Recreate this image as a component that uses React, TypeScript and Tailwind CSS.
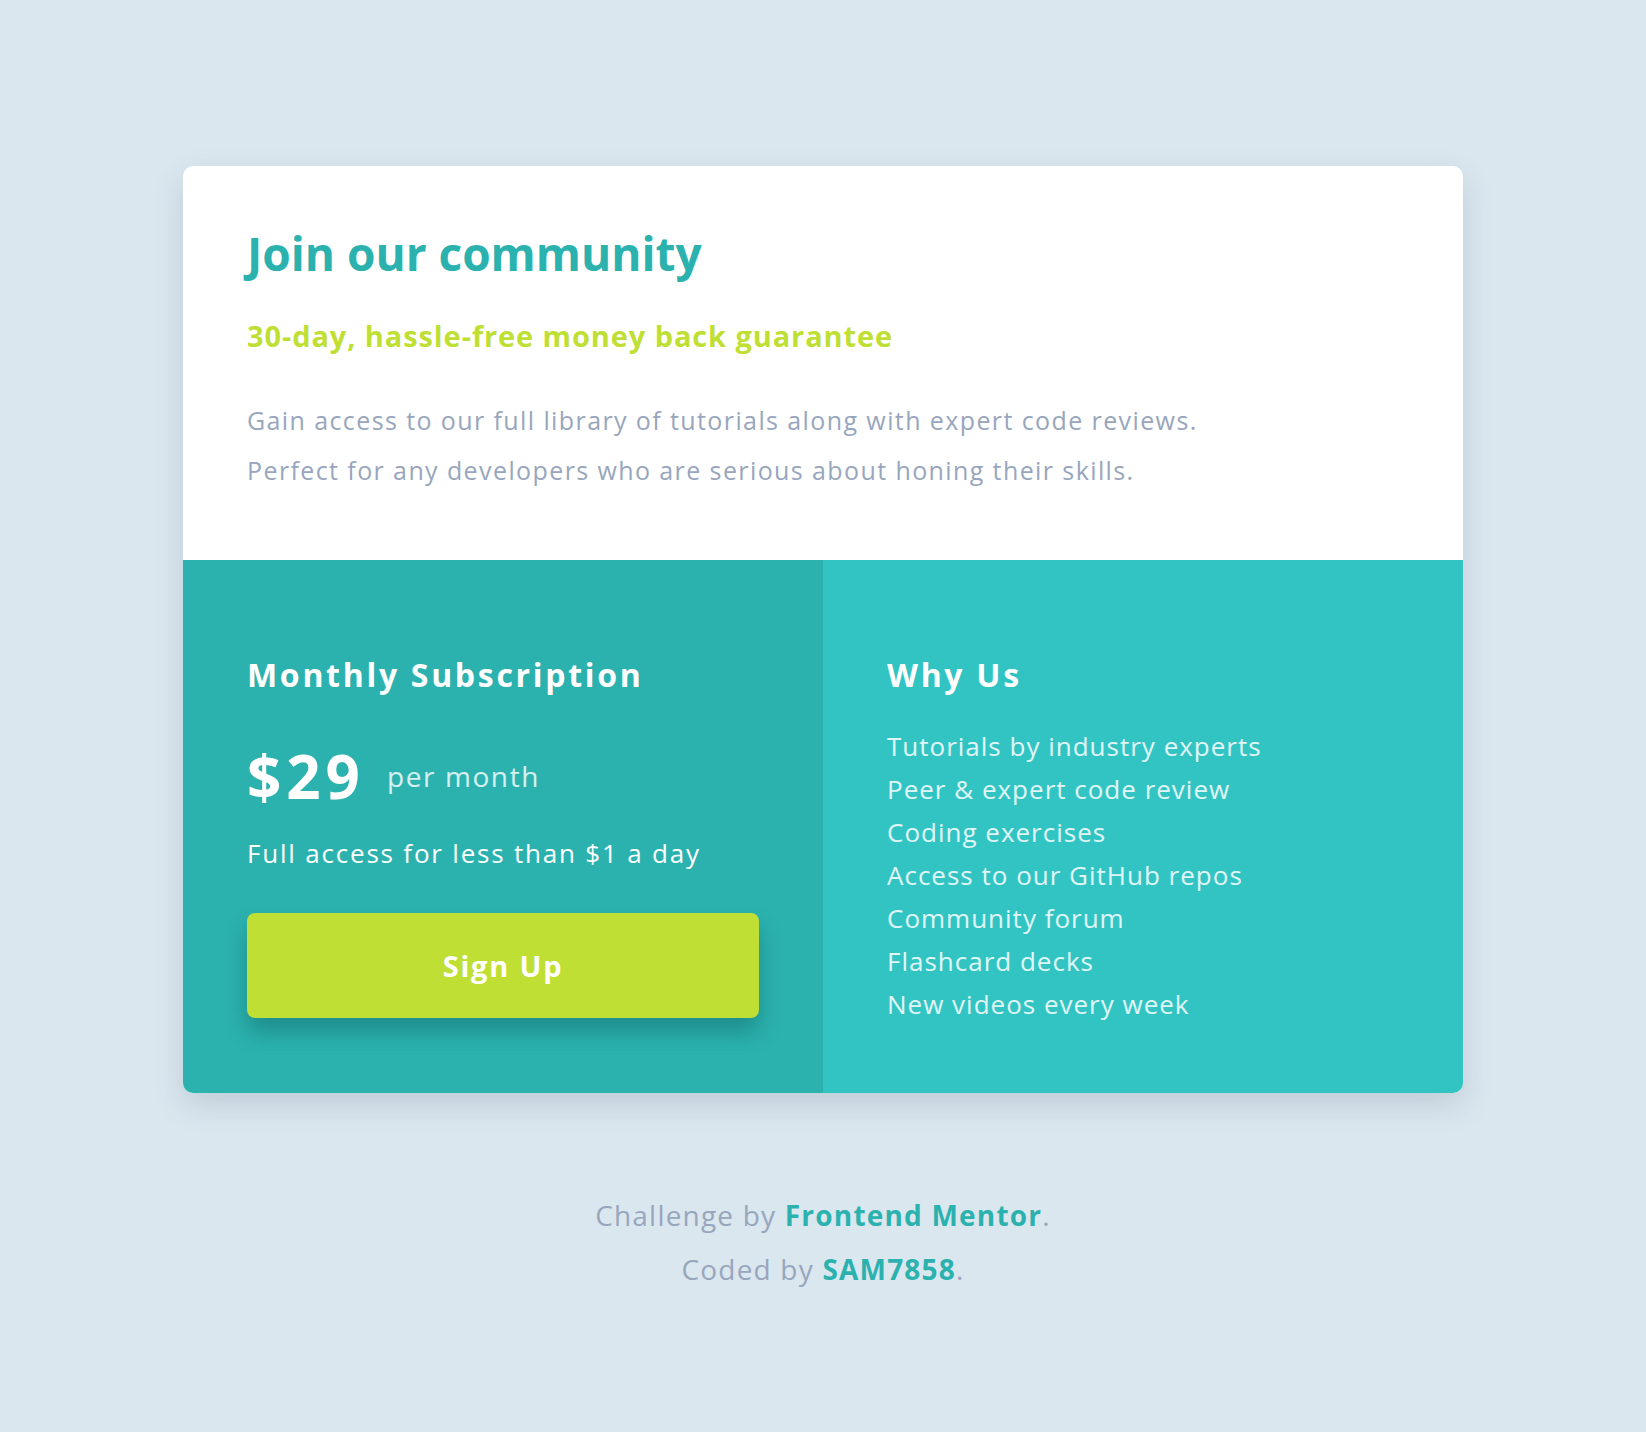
const features = [
  "Tutorials by industry experts",
  "Peer & expert code review",
  "Coding exercises",
  "Access to our GitHub repos",
  "Community forum",
  "Flashcard decks",
  "New videos every week",
];

export default function App() {
  return (
    <main className="min-h-[1432px] w-full bg-[#dbe7ef] font-['Open_Sans',sans-serif] flex flex-col items-center pt-[166px]">
      {/* Card */}
      <div className="w-[1280px] rounded-[10px] overflow-hidden bg-white shadow-[0_12px_30px_rgba(60,90,110,0.18)]">
        <section className="px-16 pt-[59px] pb-[65px]">
          <h1 className="text-[46px] leading-[56px] font-bold text-[#2bb2af]">Join our community</h1>
          <h2 className="mt-[35px] text-[29px] leading-[40px] font-bold tracking-[0.9px] text-[#c0df34]">
            30-day, hassle-free money back guarantee
          </h2>
          <p className="mt-[39px] text-[25px] leading-[50px] tracking-[1.4px] text-[#98a6bd]">
            Gain access to our full library of tutorials along with expert code reviews.
            <br />
            Perfect for any developers who are serious about honing their skills.
          </p>
        </section>

        <div className="grid grid-cols-2">
          {/* Subscription */}
          <section className="bg-[#2bb2af] px-16 pt-[95px] pb-[75px] text-white">
            <h3 className="text-[32px] leading-[40px] font-bold tracking-[2.7px]">Monthly Subscription</h3>
            <div className="mt-[49px] flex items-center">
              <span className="text-[60px] leading-[64px] font-bold tracking-[5px]">$29</span>
              <span className="ml-[22px] text-[28px] leading-[40px] tracking-[1.6px] text-white/80">per month</span>
            </div>
            <p className="mt-[27px] text-[26px] leading-[36px] tracking-[1.8px]">Full access for less than $1 a day</p>
            <button className="mt-[42px] w-[512px] h-[105px] rounded-[8px] bg-[#c0df34] text-[29px] font-bold tracking-[1.8px] text-white shadow-[0_14px_22px_rgba(0,60,60,0.3)]">
              Sign Up
            </button>
          </section>

          {/* Why us */}
          <section className="bg-[#31c4c3] px-16 pt-[95px] pb-[60px] text-white">
            <h3 className="text-[32px] leading-[40px] font-bold tracking-[2.7px]">Why Us</h3>
            <ul className="mt-[30px] text-[26px] leading-[43px] tracking-[1px] text-white/85">
              {features.map((f) => (
                <li key={f}>{f}</li>
              ))}
            </ul>
          </section>
        </div>
      </div>

      {/* Footer */}
      <footer className="mt-[95px] text-center text-[28px] leading-[54px] tracking-[1.2px] text-[#98a6bd]">
        <p>
          Challenge by <a href="#" className="font-bold text-[#2bb2af]">Frontend Mentor</a>.
        </p>
        <p>
          Coded by <a href="#" className="font-bold text-[#2bb2af]">SAM7858</a>.
        </p>
      </footer>
    </main>
  );
}
